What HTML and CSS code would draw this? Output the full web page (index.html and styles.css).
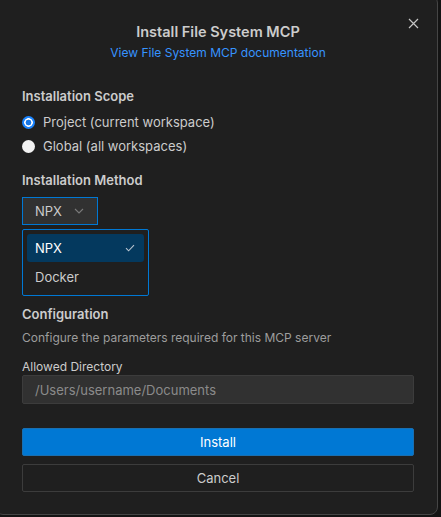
FILE: index.html
```html
<!DOCTYPE html>
<html>
<head>
<meta charset="utf-8">
<link rel="stylesheet" href="styles.css">
</head>
<body>
<div class="dialog">
  <button class="close" aria-label="Close">
    <svg width="11" height="11" viewBox="0 0 11 11"><path d="M1 1L10 10M10 1L1 10" stroke="#c5c5c5" stroke-width="1.2" fill="none"/></svg>
  </button>
  <header class="head">
    <h1 class="title">Install File System MCP</h1>
    <a class="doclink" href="#">View File System MCP documentation</a>
  </header>

  <section class="section scope">
    <h2 class="label">Installation Scope</h2>
    <div class="radios">
      <label class="radio-row"><span class="radio checked"></span>Project (current workspace)</label>
      <label class="radio-row"><span class="radio"></span>Global (all workspaces)</label>
    </div>
  </section>

  <section class="section method">
    <h2 class="label">Installation Method</h2>
    <div class="select">NPX
      <svg class="chev" width="10" height="6" viewBox="0 0 10 6"><path d="M1 1L5 5L9 1" stroke="#7a7a7a" stroke-width="1.1" fill="none"/></svg>
    </div>
    <div class="menu">
      <div class="opt active">NPX
        <svg width="10" height="8" viewBox="0 0 10 8"><path d="M1 4.2L3.6 6.8L9 1.2" stroke="#b8c4d0" stroke-width="1.1" fill="none"/></svg>
      </div>
      <div class="opt">Docker</div>
    </div>
  </section>

  <section class="section config">
    <h2 class="label">Configuration</h2>
    <p class="desc">Configure the parameters required for this MCP server</p>
    <div class="field-label">Allowed Directory</div>
    <div class="input">/Users/username/Documents</div>
  </section>

  <div class="actions">
    <button class="btn primary">Install</button>
    <button class="btn secondary">Cancel</button>
  </div>
</div>
</body>
</html>
```
FILE: styles.css
```css
html, body {
  margin: 0;
  padding: 0;
  background: #141414;
  width: 441px;
  height: 517px;
  overflow: hidden;
}
body {
  font-family: Inter, "Noto Sans", sans-serif;
  color: #cccccc;
}
.dialog {
  position: relative;
  box-sizing: border-box;
  margin: -5px 0 0 -5px;
  width: 443px;
  height: 520px;
  background: #1f1f1f;
  border: 1px solid #454545;
  border-radius: 8px;
  padding: 26px 23px 0 26px;
}
.close {
  position: absolute;
  top: 22px;
  right: 18px;
  background: none;
  border: 0;
  padding: 0;
  width: 11px;
  height: 11px;
  display: flex;
}
.head {
  display: flex;
  flex-direction: column;
  align-items: center;
}
.title {
  margin: 0;
  font-size: 14.5px;
  font-weight: 600;
  line-height: 20px;
  color: #cccccc;
}
.doclink {
  margin-top: 3px;
  font-size: 12px;
  line-height: 16px;
  color: #3794ff;
  text-decoration: none;
}
.section {
  display: flex;
  flex-direction: column;
}
.label {
  margin: 0;
  font-size: 13px;
  font-weight: 600;
  line-height: 18px;
  color: #cccccc;
}
.scope { margin-top: 26px; }
.radios {
  display: flex;
  flex-direction: column;
  gap: 6px;
  margin-top: 8px;
}
.radio-row {
  display: flex;
  align-items: center;
  gap: 8px;
  font-size: 13px;
  line-height: 18px;
  color: #cccccc;
}
.radio {
  width: 13px;
  height: 13px;
  border-radius: 50%;
  background: #f2f2f2;
}
.radio.checked {
  background: radial-gradient(circle, #1877e6 0 2.6px, #ffffff 3.2px 4px, #1a84ff 4.6px);
}
.method { margin-top: 16px; }
.select {
  box-sizing: border-box;
  margin-top: 8px;
  width: 76px;
  height: 28px;
  background: #313131;
  border: 1px solid #0078d4;
  display: flex;
  align-items: center;
  padding-left: 12px;
  gap: 12px;
  font-size: 13px;
  color: #cccccc;
}
.menu {
  box-sizing: border-box;
  margin-top: 4px;
  width: 127px;
  height: 67px;
  border: 1px solid #0078d4;
  background: #1f1f1f;
  padding: 4px 4px;
  display: flex;
  flex-direction: column;
  gap: 1px;
  border-radius: 2px;
}
.opt {
  height: 28px;
  display: flex;
  align-items: center;
  justify-content: space-between;
  padding: 0 9px 0 8px;
  font-size: 13px;
  color: #cccccc;
  border-radius: 3px;
}
.opt.active {
  background: #04395e;
  color: #ffffff;
}
.config { margin-top: 9px; }
.desc {
  margin: 7px 0 0;
  font-size: 12px;
  line-height: 16px;
  color: #9d9d9d;
}
.field-label {
  margin-top: 13px;
  font-size: 12px;
  line-height: 16px;
  color: #cccccc;
}
.input {
  box-sizing: border-box;
  margin-top: 0;
  height: 29px;
  background: #313131;
  border: 1px solid #3c3c3c;
  border-radius: 2px;
  display: flex;
  align-items: center;
  padding-left: 12px;
  font-size: 13px;
  color: #8b8b8b;
}
.actions {
  margin-top: 24px;
  display: flex;
  flex-direction: column;
  gap: 8px;
}
.btn {
  box-sizing: border-box;
  height: 28px;
  border-radius: 2px;
  font-family: Inter, "Noto Sans", sans-serif;
  font-size: 13px;
  padding: 0;
}
.primary {
  background: #0078d4;
  border: 1px solid #1a6fb0;
  color: #ffffff;
}
.secondary {
  background: #1f1f1f;
  border: 1px solid #3c3c3c;
  color: #cccccc;
}
```
